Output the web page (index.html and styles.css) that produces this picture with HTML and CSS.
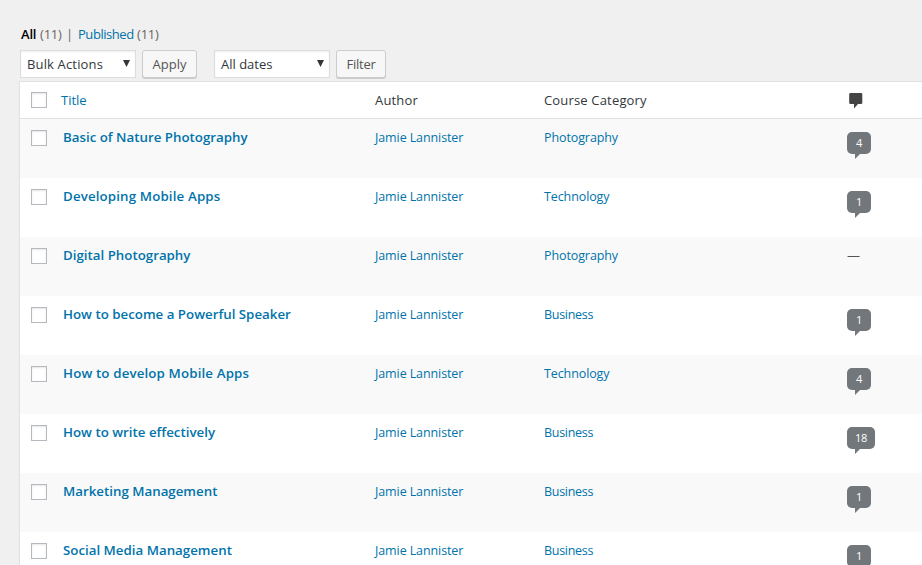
FILE: index.html
```html
<!DOCTYPE html>
<html lang="en">
<head>
<meta charset="utf-8">
<title>Courses</title>
<link rel="stylesheet" href="styles.css">
</head>
<body>
<main class="wrap">
  <nav class="views"><a class="current">All</a><span class="count">(11)</span><span class="sep">|</span><a class="published">Published</a><span class="count">(11)</span></nav>
  <div class="tablenav">
    <div class="select"><span class="bulk">Bulk Actions</span><i class="arrow"></i></div>
    <button class="button apply">Apply</button>
    <div class="select dates"><span>All dates</span><i class="arrow"></i></div>
    <button class="button filter">Filter</button>
  </div>
  <section class="list">
    <div class="row head">
      <i class="check"></i><a class="head-title">Title</a><span class="head-author">Author</span><span class="head-category">Course Category</span>
      <svg class="comment-icon" width="14" height="16" viewBox="0 0 14 16"><path d="M1.500 0h10.500q1.300 0 1.300 1.300v8.400q0 1.300-1.300 1.300H9L5 15.500V11H1.500Q.2 11 .2 9.700v-8.400Q.2 0 1.500 0z"/></svg>
    </div>
    <div class="row item"><i class="check"></i><a class="title">Basic of Nature Photography</a><a class="author">Jamie Lannister</a><a class="category">Photography</a><span class="bubble">4</span></div>
    <div class="row item"><i class="check"></i><a class="title loose">Developing Mobile Apps</a><a class="author">Jamie Lannister</a><a class="category">Technology</a><span class="bubble">1</span></div>
    <div class="row item"><i class="check"></i><a class="title">Digital Photography</a><a class="author">Jamie Lannister</a><a class="category">Photography</a><span class="none">—</span></div>
    <div class="row item"><i class="check"></i><a class="title">How to become a Powerful Speaker</a><a class="author">Jamie Lannister</a><a class="category narrow">Business</a><span class="bubble">1</span></div>
    <div class="row item"><i class="check"></i><a class="title loose">How to develop Mobile Apps</a><a class="author">Jamie Lannister</a><a class="category">Technology</a><span class="bubble">4</span></div>
    <div class="row item"><i class="check"></i><a class="title">How to write effectively</a><a class="author">Jamie Lannister</a><a class="category narrow">Business</a><span class="bubble">18</span></div>
    <div class="row item"><i class="check"></i><a class="title">Marketing Management</a><a class="author">Jamie Lannister</a><a class="category narrow">Business</a><span class="bubble">1</span></div>
    <div class="row item"><i class="check"></i><a class="title">Social Media Management</a><a class="author">Jamie Lannister</a><a class="category narrow">Business</a><span class="bubble">1</span></div>
  </section>
</main>
</body>
</html>
```
FILE: styles.css
```css
* { box-sizing: border-box; }
body {
  margin: 0;
  height: 565px;
  overflow: hidden;
  background: #f0f0f0;
  color: #32373c;
  font: 13px/20px "Open Sans", "Noto Sans", sans-serif;
  white-space: nowrap;
}
a { color: #0073aa; }
.wrap { padding: 24px 0 0 19px; }
.views { display: flex; height: 20px; padding-left: 2px; color: #666; }
.views .current { color: #000; font-weight: 600; letter-spacing: -.2px; width: 19px; }
.views .sep { width: 10px; margin-left: 4px; }
.views .published { width: 59px; margin-left: 2px; letter-spacing: -.45px; }
.views .count { width: 22px; letter-spacing: -.2px; }
.tablenav { display: flex; height: 37px; padding: 6px 0 0 1px; }
.select {
  display: flex;
  justify-content: space-between;
  width: 116px;
  height: 28px;
  padding: 3px 5px 0 6px;
  border: 1px solid #ddd;
  background: #fff;
  box-shadow: inset 0 1px 2px rgba(0, 0, 0, .07);
}
.bulk { letter-spacing: .15px; }
.arrow {
  width: 7px;
  height: 7px;
  margin-top: 6px;
  background: #32373c;
  clip-path: polygon(0 0, 100% 0, 50% 100%);
}
.button {
  height: 28px;
  margin-left: 6px;
  padding: 0 0 1px;
  border: 1px solid #ccc;
  border-radius: 3px;
  background: #f7f7f7;
  box-shadow: 0 1px 0 #ccc;
  color: #555;
  font: inherit;
}
.apply { width: 55px; }
.dates { margin-left: 17px; }
.filter { width: 50px; letter-spacing: -.25px; }
.list {
  height: 500px;
  border: 1px solid #e1e1e1;
  border-right: 0;
  background: #fff;
  box-shadow: 0 1px 1px rgba(0, 0, 0, .04);
}
.row {
  display: grid;
  grid-template-columns: 43px 312px 169px 303px 1fr;
  align-items: start;
  justify-items: start;
}
.head { height: 37px; padding-top: 8px; border-bottom: 1px solid #e1e1e1; }
.item { height: 59px; padding-top: 8px; }
.item:nth-child(even) { background: #f9f9f9; }
.check {
  width: 16px;
  height: 16px;
  margin: 2px 0 0 11px;
  border: 1px solid #b4b9be;
  background: #fff;
  box-shadow: inset 0 1px 2px rgba(0, 0, 0, .1);
}
.item .check { margin-top: 3px; }
.head-title { margin-left: -2px; }
.head-author, .head-category { letter-spacing: .17px; }
.comment-icon { margin: 3px 0 0 2px; fill: #444; }
.title { font-size: 13.3px; font-weight: 600; }
.loose { letter-spacing: .14px; }
.author, .category { margin-top: 1px; font-size: 12.5px; letter-spacing: -.1px; }
.narrow { letter-spacing: -.3px; }
.bubble {
  position: relative;
  min-width: 24px;
  height: 22px;
  margin-top: 5px;
  padding: 0 8px;
  border-radius: 5px;
  background: #72777c;
  color: #fff;
  font: 11px/22px "Open Sans", sans-serif;
  letter-spacing: -.2px;
  text-align: center;
}
.bubble::after {
  content: "";
  position: absolute;
  left: 8px;
  top: 22px;
  width: 5px;
  height: 5px;
  background: #72777c;
  clip-path: polygon(0 0, 100% 0, 0 100%);
}
.none { color: #555; }
```
